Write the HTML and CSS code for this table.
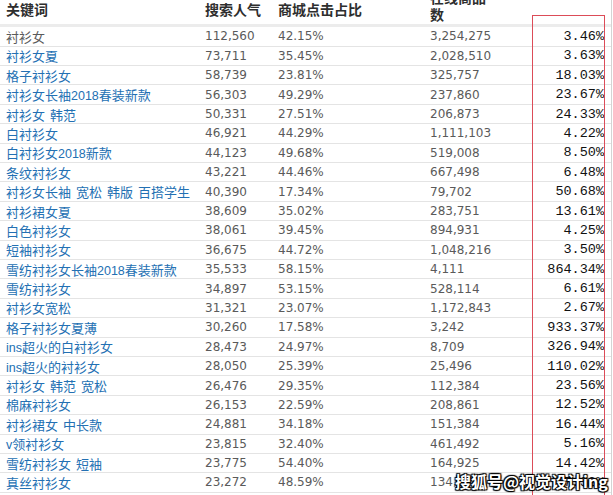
FILE: index.html
```html
<!DOCTYPE html>
<html>
<head>
<meta charset="utf-8">
<link rel="stylesheet" href="styles.css">
</head>
<body>
<div class="sheet">
  <div class="row head">
    <div class="c kw">关键词</div>
    <div class="c s">搜索人气</div>
    <div class="c p">商城点击占比</div>
    <div class="c o"><span class="wrap">在线商品数</span></div>
    <div class="c r"></div>
  </div>
  <div id="body"></div>
  <div class="redbox"></div>
  <div class="mark">搜狐号@视觉设计ing</div>
</div>
<script>
const data = [
["衬衫女","112,560","42.15%","3,254,275","3.46%"],
["衬衫女夏","73,711","35.45%","2,028,510","3.63%"],
["格子衬衫女","58,739","23.81%","325,757","18.03%"],
["衬衫女长袖2018春装新款","56,303","49.29%","237,860","23.67%"],
["衬衫女 韩范","50,331","27.51%","206,873","24.33%"],
["白衬衫女","46,921","44.29%","1,111,103","4.22%"],
["白衬衫女2018新款","44,123","49.68%","519,008","8.50%"],
["条纹衬衫女","43,221","44.46%","667,498","6.48%"],
["衬衫女长袖 宽松 韩版 百搭学生","40,390","17.34%","79,702","50.68%"],
["衬衫裙女夏","38,609","35.02%","283,751","13.61%"],
["白色衬衫女","38,061","39.45%","894,931","4.25%"],
["短袖衬衫女","36,675","44.72%","1,048,216","3.50%"],
["雪纺衬衫女长袖2018春装新款","35,533","58.15%","4,111","864.34%"],
["雪纺衬衫女","34,897","53.15%","528,114","6.61%"],
["衬衫女宽松","31,321","23.07%","1,172,843","2.67%"],
["格子衬衫女夏薄","30,260","17.58%","3,242","933.37%"],
["ins超火的白衬衫女","28,473","24.97%","8,709","326.94%"],
["ins超火的衬衫女","28,050","25.39%","25,496","110.02%"],
["衬衫女 韩范 宽松","26,476","29.35%","112,384","23.56%"],
["棉麻衬衫女","26,153","22.59%","208,861","12.52%"],
["衬衫裙女 中长款","24,881","34.18%","151,384","16.44%"],
["v领衬衫女","23,815","32.40%","461,492","5.16%"],
["雪纺衬衫女 短袖","23,775","54.40%","164,925","14.42%"],
["真丝衬衫女","23,272","48.59%","134,365","17.32%"]
];
function fmt(s) {
  return s.split(' ')
    .map(part => part.replace(/[A-Za-z0-9]+/g, m => '<span class="lat">' + m + '</span>'))
    .join('<i class="sp"></i>');
}
const body = document.getElementById('body');
data.forEach((d, i) => {
  const row = document.createElement('div');
  row.className = 'row';
  row.innerHTML =
    '<div class="c kw' + (i === 0 ? ' plain' : ' link') + '">' + fmt(d[0]) + '</div>' +
    '<div class="c s">' + d[1] + '</div>' +
    '<div class="c p">' + d[2] + '</div>' +
    '<div class="c o">' + d[3] + '</div>' +
    '<div class="c r">' + d[4] + '</div>';
  body.appendChild(row);
});
</script>
</body>
</html>
```
FILE: styles.css
```css
html, body {
  margin: 0;
  padding: 0;
  background: #fff;
  overflow: hidden;
}
.sheet {
  position: relative;
  width: 611px;
  height: 495px;
  border-right: 1px solid #d4d4d4;
  font-family: "DejaVu Sans", "Noto Sans CJK SC", sans-serif;
  font-size: 12px;
  color: #5a5a5a;
}
.row {
  display: flex;
  align-items: center;
  height: 19.4px;
  box-sizing: border-box;
  border-bottom: 1px solid #e4e4e4;
  padding-left: 6px;
  white-space: nowrap;
}
.row.head {
  height: 27.3px;
  padding-bottom: 6px;
  border-bottom: 3px solid #ececec;
  font-family: "Noto Sans CJK SC", sans-serif;
  font-weight: bold;
  font-size: 14px;
  color: #2e2e2e;
}
.c { flex: none; }
.kw {
  width: 199px;
  font-family: "Noto Sans CJK SC", sans-serif;
  font-size: 13px;
}
.head .kw { font-size: 14px; }
.lat {
  font-family: "Liberation Sans", sans-serif;
  font-size: 12.5px;
}
.sp {
  display: inline-block;
  width: 5px;
}
.kw.link { color: #2370b3; }
.kw.plain { color: #5a5a5a; }
.s { width: 73px; }
.p { width: 152px; }
.o { width: 102px; }
.head .o { line-height: 17px; margin-top: -6px; }
.wrap { display: block; width: 58px; white-space: normal; }
.r {
  width: 72px;
  text-align: right;
  font-family: "Liberation Mono", monospace;
  font-size: 13.5px;
  color: #111;
  padding-right: 2px;
}
.redbox {
  position: absolute;
  left: 532px;
  top: 15px;
  width: 73px;
  height: 500px;
  border: 1.5px solid #dc4c58;
  box-sizing: border-box;
}
.mark {
  position: absolute;
  left: 455px;
  top: 469px;
  font-family: "Noto Sans CJK SC", sans-serif;
  font-size: 16px;
  font-weight: bold;
  color: #fff;
  white-space: nowrap;
  text-shadow: 0 0 1px #000, 0 0 1px #000, 1px 1px 1px #000, -1px -1px 1px #000, 1px -1px 1px #000, -1px 1px 1px #000;
}
```
